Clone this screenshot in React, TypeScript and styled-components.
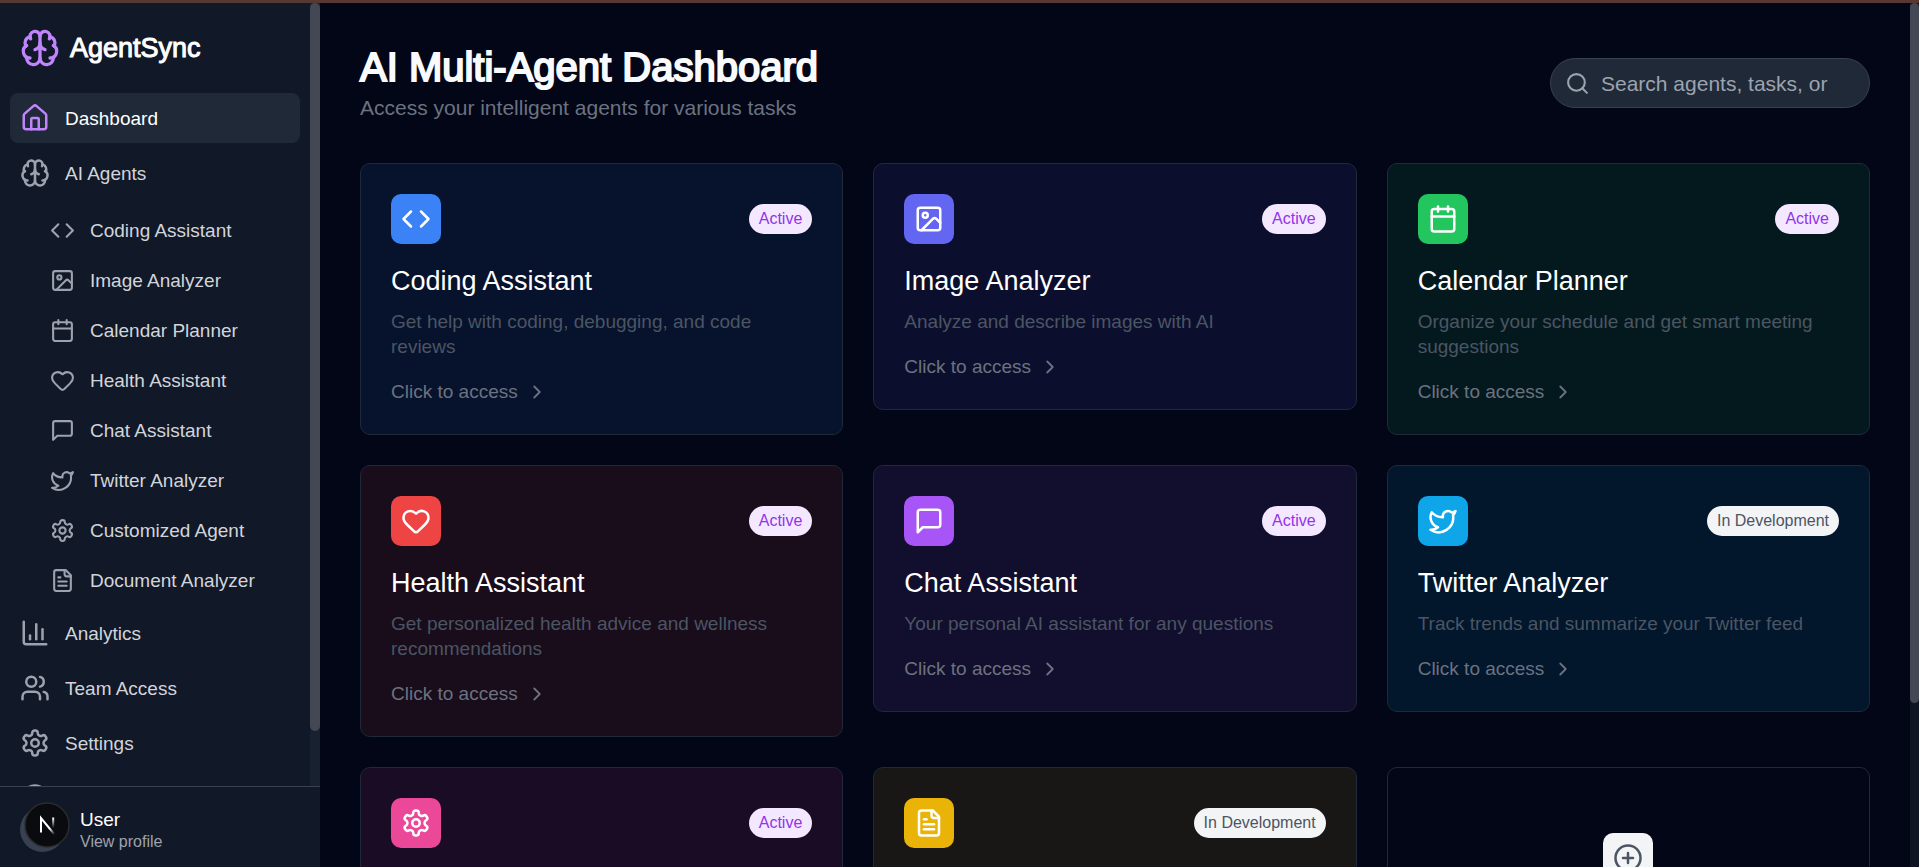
import React from 'react';
import styled, { createGlobalStyle } from 'styled-components';
import {
  Brain,
  Calendar,
  ChartColumn,
  ChevronRight,
  CircleHelp,
  CirclePlus,
  Code,
  Heart,
  House,
  Image,
  Search,
  Twitter,
  Users,
} from 'lucide-react';

type IconProps = { size?: number };
type IconType = React.ComponentType<IconProps>;

const GlobalStyle = createGlobalStyle`
  *, *::before, *::after { box-sizing: border-box; }
  body {
    margin: 0;
    background: #020617;
    color: #ffffff;
    font-family: "Liberation Sans", Arial, sans-serif;
    font-size: 19px;
    line-height: 25px;
  }
  h1, h2, p, ul { margin: 0; padding: 0; font-weight: 400; }
  ul { list-style: none; }
  a { color: inherit; text-decoration: none; }
  svg { display: block; flex-shrink: 0; }
`;

const Outline = ({ size = 24, children }: IconProps & { children: React.ReactNode }) => (
  <svg
    width={size}
    height={size}
    viewBox="0 0 24 24"
    fill="none"
    stroke="currentColor"
    strokeWidth="2"
    strokeLinecap="round"
    strokeLinejoin="round"
    aria-hidden="true"
  >
    {children}
  </svg>
);

const MessageIcon = ({ size }: IconProps) => (
  <Outline size={size}>
    <path d="M21 15a2 2 0 0 1-2 2H7l-4 4V5a2 2 0 0 1 2-2h14a2 2 0 0 1 2 2z" />
  </Outline>
);

const FileIcon = ({ size }: IconProps) => (
  <Outline size={size}>
    <path d="M15 2H6a2 2 0 0 0-2 2v16a2 2 0 0 0 2 2h12a2 2 0 0 0 2-2V7Z" />
    <path d="M14 2v4a2 2 0 0 0 2 2h4" />
    <path d="M10 9H8" />
    <path d="M16 13H8" />
    <path d="M16 17H8" />
  </Outline>
);

const GearIcon = ({ size }: IconProps) => (
  <Outline size={size}>
    <path d="M12.22 2h-.44a2 2 0 0 0-2 2v.18a2 2 0 0 1-1 1.73l-.43.25a2 2 0 0 1-2 0l-.15-.08a2 2 0 0 0-2.73.73l-.22.38a2 2 0 0 0 .73 2.73l.15.1a2 2 0 0 1 1 1.72v.51a2 2 0 0 1-1 1.74l-.15.09a2 2 0 0 0-.73 2.73l.22.38a2 2 0 0 0 2.73.73l.15-.08a2 2 0 0 1 2 0l.43.25a2 2 0 0 1 1 1.73V20a2 2 0 0 0 2 2h.44a2 2 0 0 0 2-2v-.18a2 2 0 0 1 1-1.73l.43-.25a2 2 0 0 1 2 0l.15.08a2 2 0 0 0 2.73-.73l.22-.39a2 2 0 0 0-.73-2.73l-.15-.08a2 2 0 0 1-1-1.74v-.5a2 2 0 0 1 1-1.74l.15-.09a2 2 0 0 0 .73-2.73l-.22-.38a2 2 0 0 0-2.73-.73l-.15.08a2 2 0 0 1-2 0l-.43-.25a2 2 0 0 1-1-1.73V4a2 2 0 0 0-2-2z" />
    <circle cx="12" cy="12" r="3" />
  </Outline>
);

const Shell = styled.div`
  display: flex;
  height: 100vh;
  border-top: 3px solid #573934;
  overflow: hidden;
`;

const Sidebar = styled.aside`
  position: relative;
  display: flex;
  flex-direction: column;
  flex: 0 0 320px;
  background: #111827;
`;

const ScrollRow = styled.div`
  display: flex;
  flex: 1;
  min-height: 0;
`;

const ScrollArea = styled.div`
  flex: 1;
  min-width: 0;
  overflow-y: auto;
  scrollbar-width: none;
`;

const Track = styled.div<{ $color: string; $width: number }>`
  flex: 0 0 ${(p) => p.$width}px;
  background: ${(p) => p.$color};
`;

const Thumb = styled.div<{ $share: number }>`
  height: ${(p) => p.$share}%;
  border-radius: 5px;
  background: #444854;
`;

const Brand = styled.a`
  display: flex;
  align-items: center;
  gap: 10px;
  padding: 25px 20px;
  font-size: 27px;
  line-height: 40px;
  -webkit-text-stroke: 1px currentColor;

  svg { color: #c084fc; }
`;

const NavList = styled.ul`
  display: flex;
  flex-direction: column;
  gap: 5px;
  padding: 0 10px;
`;

const SubList = styled.ul`
  display: flex;
  flex-direction: column;
  gap: 5px;
  padding: 10px 0 0 30px;
`;

const NavLink = styled.a<{ $active?: boolean; $nested?: boolean }>`
  display: flex;
  align-items: center;
  gap: 15px;
  height: ${(p) => (p.$nested ? 45 : 50)}px;
  padding: 0 10px;
  border-radius: 8px;
  background: ${(p) => (p.$active ? '#1f2937' : 'transparent')};
  color: ${(p) => (p.$active ? '#ffffff' : '#d1d5db')};

  svg { color: ${(p) => (p.$active ? '#c084fc' : '#9ca3af')}; }
`;

const Profile = styled.a`
  display: flex;
  gap: 15px;
  padding: 20px 20px 15px;
  border-top: 1px solid #374151;
`;

const Avatar = styled.span`
  width: 45px;
  height: 45px;
  border-radius: 50%;
  background: #374151;
`;

const ProfileName = styled.span`
  display: block;
`;

const ProfileHint = styled.span`
  display: block;
  color: #9ca3af;
  font-size: 16px;
  line-height: 20px;
`;

const DevButton = styled.button`
  position: absolute;
  left: 24px;
  bottom: 19px;
  width: 46px;
  height: 46px;
  padding: 0;
  border: 0;
  background: none;
`;

const Content = styled.main`
  padding: 40px;
`;

const Header = styled.header`
  display: flex;
  align-items: center;
  justify-content: space-between;
  margin-bottom: 40px;
`;

const Title = styled.h1`
  margin-bottom: 2px;
  color: #f9fafb;
  font-size: 40px;
  line-height: 48px;
  -webkit-text-stroke: 2px currentColor;
`;

const Subtitle = styled.p`
  color: #6b7280;
  font-size: 21px;
  line-height: 30px;
`;

const SearchBox = styled.label`
  display: flex;
  align-items: center;
  gap: 11px;
  width: 320px;
  height: 50px;
  padding: 0 39px 0 14px;
  border: 1px solid #374151;
  border-radius: 25px;
  background: #1f2937;
  color: #9ca3af;
`;

const SearchInput = styled.input`
  flex: 1;
  min-width: 0;
  padding: 0;
  border: 0;
  outline: 0;
  background: transparent;
  color: #ffffff;
  font: inherit;
  font-size: 21px;

  &::placeholder { color: #9ca3af; opacity: 1; }
`;

const Grid = styled.div`
  display: grid;
  grid-template-columns: repeat(3, 1fr);
  align-items: start;
  gap: 30px;
`;

const Card = styled.a<{ $tint: string }>`
  display: block;
  padding: 30px;
  border: 1px solid #1f2937;
  border-radius: 10px;
  background: ${(p) => p.$tint}1a;
`;

const AddCard = styled.button`
  display: flex;
  flex-direction: column;
  align-items: center;
  gap: 20px;
  padding: 65px 30px;
  border: 1px solid #1f2937;
  border-radius: 10px;
  background: transparent;
  color: #ffffff;
  font: inherit;
`;

const CardTop = styled.div`
  display: flex;
  align-items: center;
  justify-content: space-between;
  margin-bottom: 20px;
`;

const IconTile = styled.span<{ $bg: string; $fg?: string }>`
  display: grid;
  place-items: center;
  width: 50px;
  height: 50px;
  border-radius: 10px;
  background: ${(p) => p.$bg};
  color: ${(p) => p.$fg ?? '#ffffff'};
`;

const Badge = styled.span<{ $live: boolean }>`
  padding: 0 10px;
  border-radius: 15px;
  background: ${(p) => (p.$live ? '#f3e8ff' : '#f3f4f6')};
  color: ${(p) => (p.$live ? '#9333ea' : '#4b5563')};
  font-size: 16px;
  line-height: 30px;
`;

const CardTitle = styled.h2`
  margin-bottom: 10px;
  font-size: 27px;
  line-height: 35px;
`;

const CardText = styled.p`
  margin-bottom: 20px;
  color: #4b5563;
`;

const CardAction = styled.span`
  display: flex;
  align-items: center;
  gap: 8px;
  color: #6b7280;
`;

type Agent = { name: string; text: string; color: string; icon: IconType; live: boolean };

const agents: Agent[] = [
  { name: 'Coding Assistant', text: 'Get help with coding, debugging, and code reviews', color: '#3b82f6', icon: Code, live: true },
  { name: 'Image Analyzer', text: 'Analyze and describe images with AI', color: '#6366f1', icon: Image, live: true },
  { name: 'Calendar Planner', text: 'Organize your schedule and get smart meeting suggestions', color: '#22c55e', icon: Calendar, live: true },
  { name: 'Health Assistant', text: 'Get personalized health advice and wellness recommendations', color: '#ef4444', icon: Heart, live: true },
  { name: 'Chat Assistant', text: 'Your personal AI assistant for any questions', color: '#a855f7', icon: MessageIcon, live: true },
  { name: 'Twitter Analyzer', text: 'Track trends and summarize your Twitter feed', color: '#0ea5e9', icon: Twitter, live: false },
  { name: 'Customized Agent', text: 'Create your own AI agent', color: '#ec4899', icon: GearIcon, live: true },
  { name: 'Document Analyzer', text: 'Analyze and summarize documents', color: '#eab308', icon: FileIcon, live: false },
];

const NavItem = ({ icon: Icon, label, active, children }: {
  icon: IconType;
  label: string;
  active?: boolean;
  children?: React.ReactNode;
}) => (
  <li>
    <NavLink href="#" $active={active} aria-current={active ? 'page' : undefined}>
      <Icon size={30} />
      {label}
    </NavLink>
    {children}
  </li>
);

const AgentCard = ({ name, text, color, icon: Icon, live }: Agent) => (
  <Card href="#" $tint={color}>
    <CardTop>
      <IconTile $bg={color}><Icon size={30} /></IconTile>
      <Badge $live={live}>{live ? 'Active' : 'In Development'}</Badge>
    </CardTop>
    <CardTitle>{name}</CardTitle>
    <CardText>{text}</CardText>
    <CardAction>
      Click to access
      <ChevronRight size={22} />
    </CardAction>
  </Card>
);

export default function App() {
  return (
    <>
      <GlobalStyle />
      <Shell>
        <Sidebar>
          <ScrollRow>
            <ScrollArea>
              <Brand href="#">
                <Brain size={40} />
                AgentSync
              </Brand>
              <nav aria-label="Main">
                <NavList>
                  <NavItem icon={House} label="Dashboard" active />
                  <NavItem icon={Brain} label="AI Agents">
                    <SubList>
                      {agents.map(({ name, icon: Icon }) => (
                        <li key={name}>
                          <NavLink href="#" $nested>
                            <Icon size={25} />
                            {name}
                          </NavLink>
                        </li>
                      ))}
                    </SubList>
                  </NavItem>
                  <NavItem icon={ChartColumn} label="Analytics" />
                  <NavItem icon={Users} label="Team Access" />
                  <NavItem icon={GearIcon} label="Settings" />
                  <NavItem icon={CircleHelp} label="Help" />
                </NavList>
              </nav>
            </ScrollArea>
            <Track $color="#18212f" $width={10} aria-hidden="true">
              <Thumb $share={93} />
            </Track>
          </ScrollRow>
          <Profile href="#">
            <Avatar />
            <span>
              <ProfileName>User</ProfileName>
              <ProfileHint>View profile</ProfileHint>
            </span>
          </Profile>
          <DevButton type="button" aria-label="Open developer tools">
            <svg width="46" height="46" viewBox="0 0 46 46" fill="none">
              <defs>
                <linearGradient id="diagonal" x1="26" y1="26" x2="31" y2="32" gradientUnits="userSpaceOnUse">
                  <stop stopColor="#fff" />
                  <stop offset="1" stopColor="#fff" stopOpacity="0" />
                </linearGradient>
                <linearGradient id="stem" x1="29" y1="16" x2="29" y2="26" gradientUnits="userSpaceOnUse">
                  <stop stopColor="#fff" />
                  <stop offset="1" stopColor="#fff" stopOpacity="0" />
                </linearGradient>
              </defs>
              <circle cx="23" cy="23" r="22" fill="#0a0b0e" stroke="#2b2b2d" strokeWidth="1.5" />
              <path d="M17 30.500V16L30.500 32.500" stroke="url(#diagonal)" strokeWidth="2" />
              <path d="M29.200 15.500V26" stroke="url(#stem)" strokeWidth="2" />
            </svg>
          </DevButton>
        </Sidebar>
        <ScrollArea>
          <Content>
            <Header>
              <div>
                <Title>AI Multi-Agent Dashboard</Title>
                <Subtitle>Access your intelligent agents for various tasks</Subtitle>
              </div>
              <SearchBox>
                <Search size={25} />
                <SearchInput type="text" aria-label="Search" placeholder="Search agents, tasks, or tools..." />
              </SearchBox>
            </Header>
            <Grid>
              {agents.map((agent) => (
                <AgentCard key={agent.name} {...agent} />
              ))}
              <AddCard type="button">
                <IconTile $bg="#f3f4f6" $fg="#4b5563"><CirclePlus size={30} /></IconTile>
                Add New Agent
              </AddCard>
            </Grid>
          </Content>
        </ScrollArea>
        <Track $color="#0f1523" $width={9} aria-hidden="true">
          <Thumb $share={81} />
        </Track>
      </Shell>
    </>
  );
}
